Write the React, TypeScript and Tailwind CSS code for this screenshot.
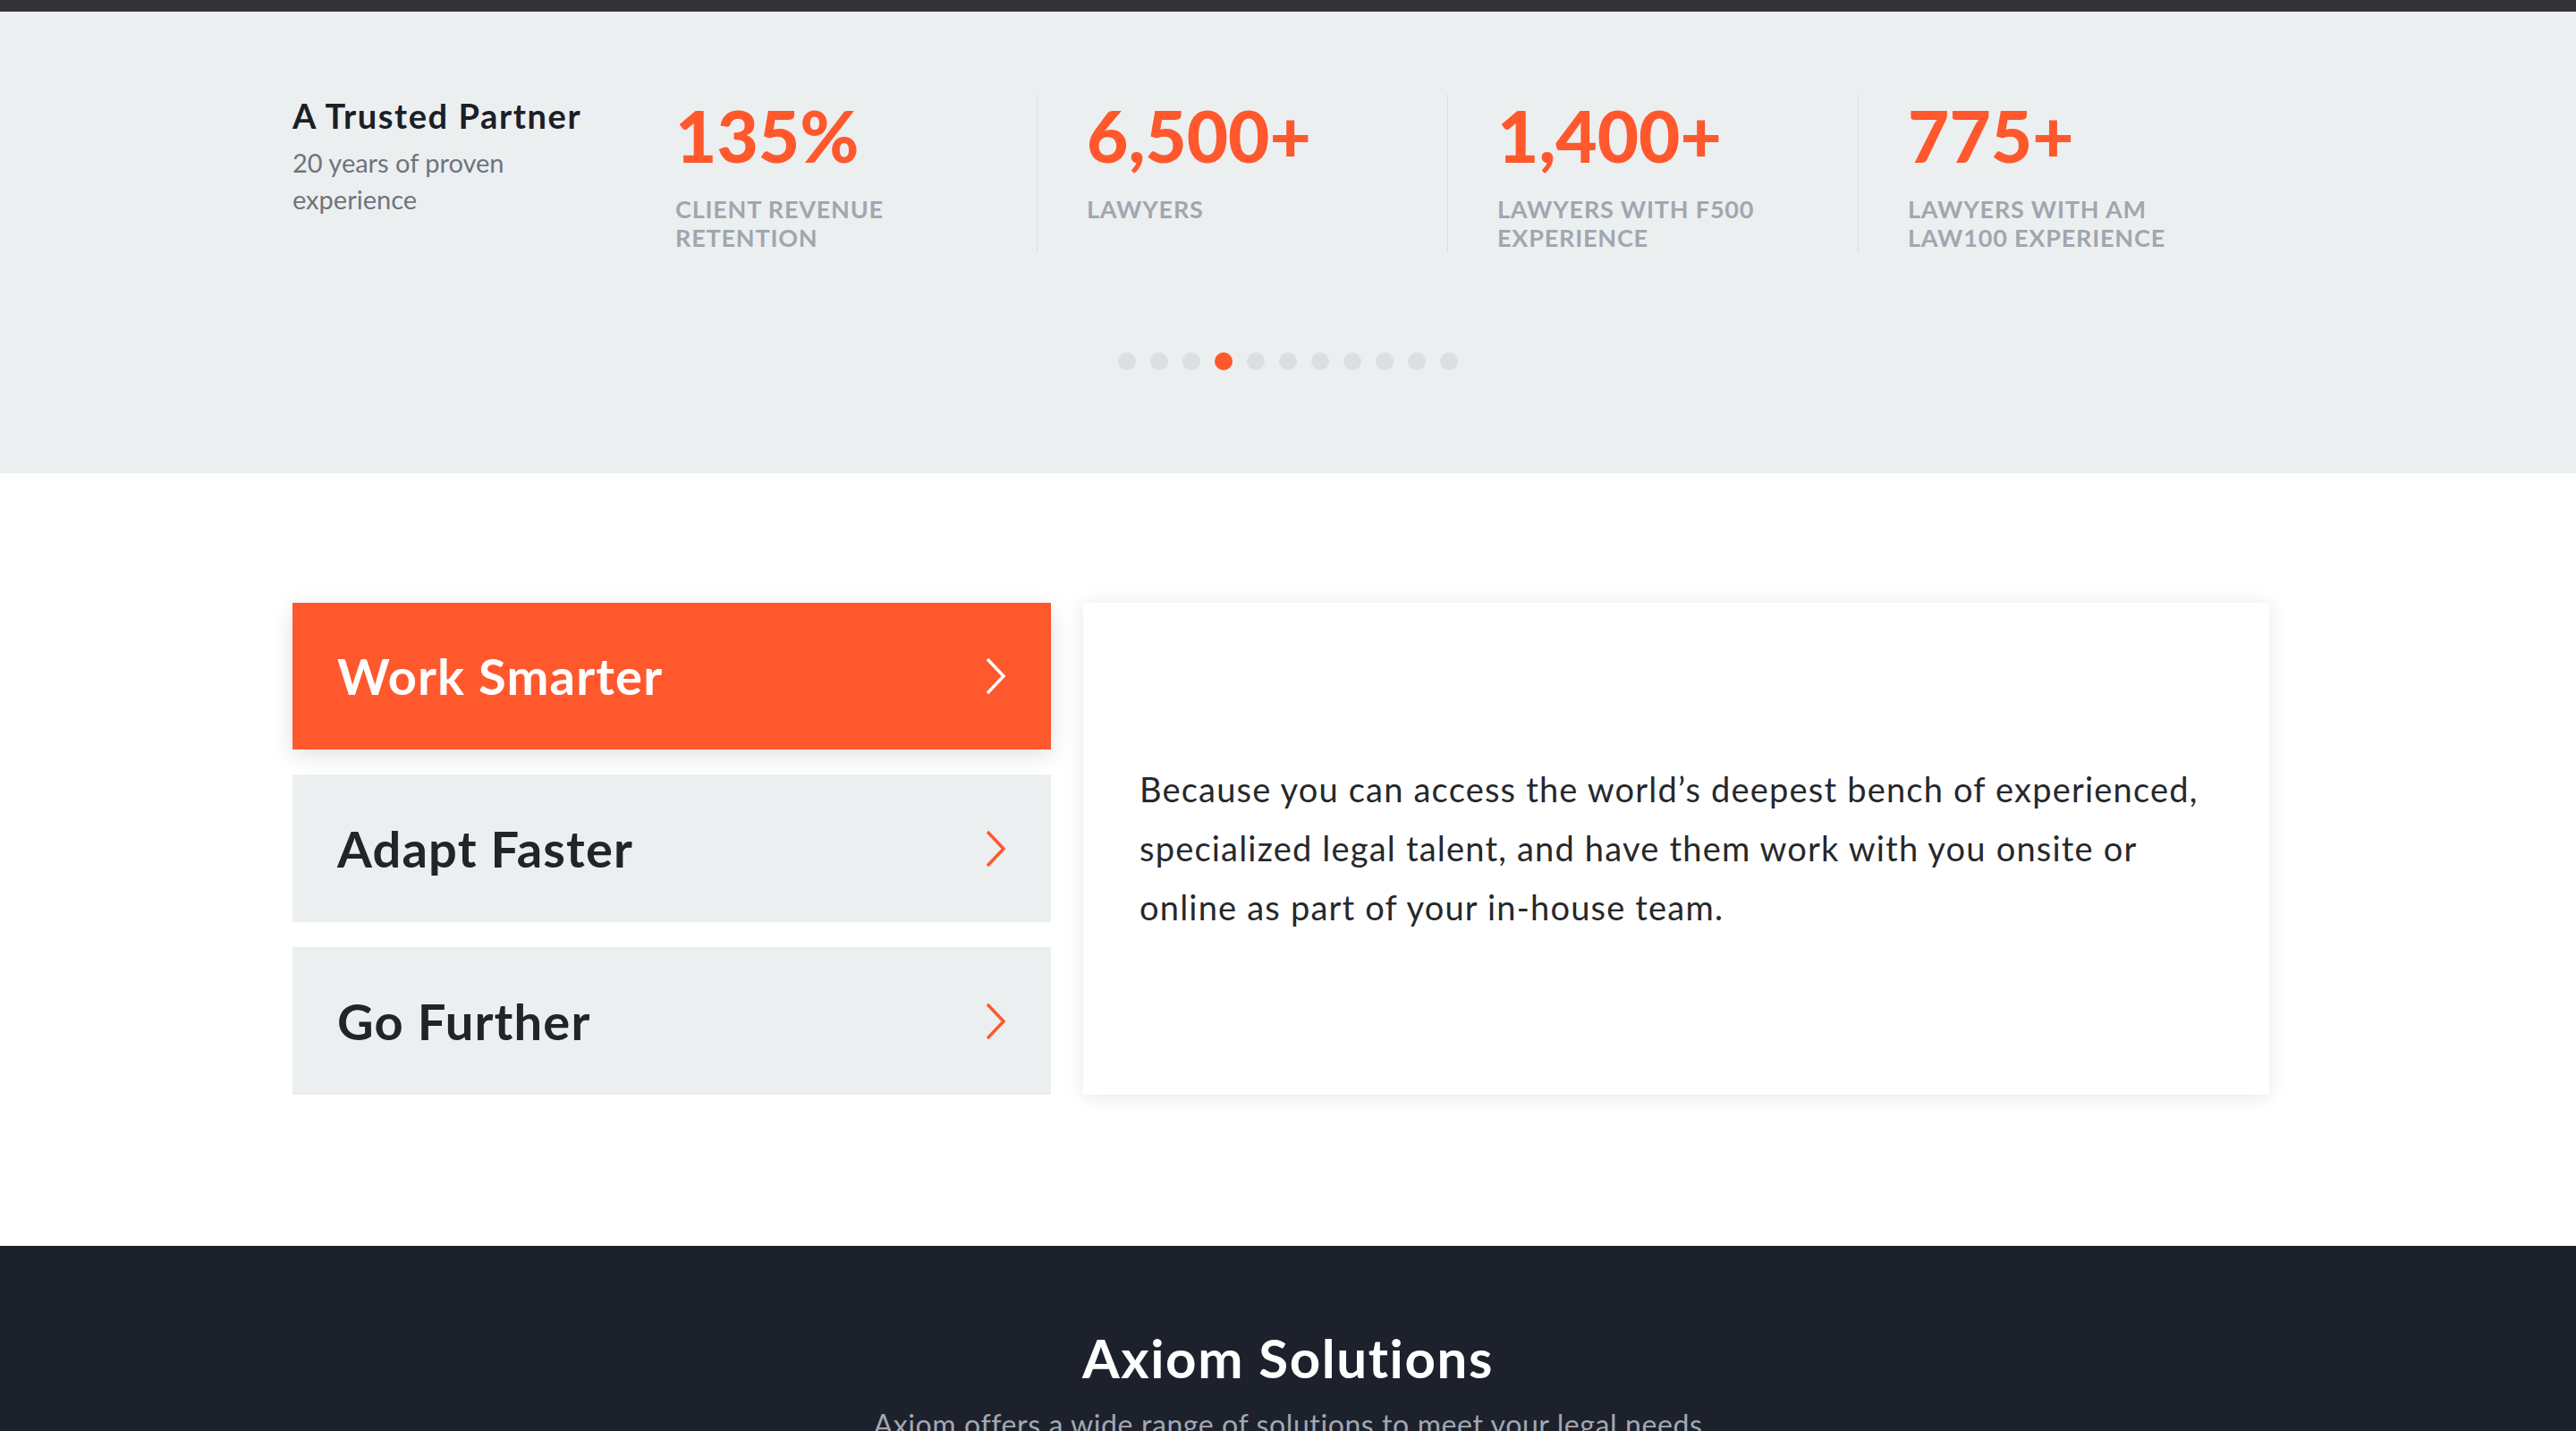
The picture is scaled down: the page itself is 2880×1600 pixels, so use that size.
import React from "react";

const stats = [
  { value: "135%", label: ["CLIENT REVENUE", "RETENTION"] },
  { value: "6,500+", label: ["LAWYERS"] },
  { value: "1,400+", label: ["LAWYERS WITH F500", "EXPERIENCE"] },
  { value: "775+", label: ["LAWYERS WITH AM", "LAW100 EXPERIENCE"] },
];

const tabs = ["Work Smarter", "Adapt Faster", "Go Further"];

const Chevron = ({ color }: { color: string }) => (
  <svg width="26" height="42" viewBox="0 0 26 42" fill="none">
    <polyline points="4,2 22,21 4,40" stroke={color} strokeWidth="3.5" strokeLinejoin="miter" />
  </svg>
);

const App: React.FC = () => {
  return (
    <div className="min-h-[1600px] bg-white font-['Lato',sans-serif]">
      <div className="h-[13px] bg-[#333338]" />

      {/* stats strip */}
      <section className="bg-[#eceff0] h-[516px] pt-[92px]">
        <div className="ml-[327px] w-[2210px] flex items-start">
          <div className="w-[428px]">
            <h3 className="text-[38px] leading-[44px] font-bold text-[#1b1f27] mt-[2px] tracking-[1.6px]">
              A Trusted Partner
            </h3>
            <p className="text-[29px] leading-[41px] text-[#6f747c] mt-[10px]">
              20 years of proven
              <br />
              experience
            </p>
          </div>
          {stats.map((s, i) => (
            <div
              key={s.value}
              className={
                i === 0
                  ? "w-[404px] h-[177px]"
                  : "w-[459px] h-[177px] border-l border-[#d9dde0] pl-[55px]"
              }
            >
              <div className="text-[80px] leading-[80px] font-black text-[#ff582d] mt-[6px] tracking-[0px]">
                {s.value}
              </div>
              <div className="mt-[27px] text-[27px] leading-[32px] font-bold text-[#a1a6af] tracking-[0.8px]">
                {s.label.map((l) => (
                  <div key={l}>{l}</div>
                ))}
              </div>
            </div>
          ))}
        </div>
        <div className="flex justify-center gap-[16px] mt-[112px]">
          {Array.from({ length: 11 }).map((_, i) => (
            <span
              key={i}
              className={
                i === 3
                  ? "w-[20px] h-[20px] rounded-full bg-[#ff582d]"
                  : "w-[20px] h-[20px] rounded-full bg-[#dadfe1]"
              }
            />
          ))}
        </div>
      </section>

      {/* tabs */}
      <section className="bg-white pt-[145px] pb-[169px]">
        <div className="ml-[327px] w-[2210px] flex gap-[36px]">
          <div className="w-[848px] flex flex-col gap-[28px]">
            {tabs.map((t, i) => (
              <div
                key={t}
                className={
                  i === 0
                    ? "h-[164px] bg-[#ff582d] flex items-center justify-between pl-[50px] pr-[49px] shadow-[0_6px_24px_rgba(0,0,0,0.12)]"
                    : "h-[165px] bg-[#eceff0] flex items-center justify-between pl-[50px] pr-[49px]"
                }
              >
                <span
                  className={
                    i === 0
                      ? "text-[56px] font-bold text-white tracking-[1.2px]"
                      : "text-[56px] font-bold text-[#222428] tracking-[1.2px]"
                  }
                >
                  {t}
                </span>
                <Chevron color={i === 0 ? "#ffffff" : "#ff582d"} />
              </div>
            ))}
          </div>
          <div className="w-[1326px] bg-white shadow-[0_2px_20px_rgba(0,0,0,0.1)] flex items-center pl-[63px] pr-[40px]">
            <p className="text-[38px] leading-[66px] text-[#26282c] tracking-[1.2px] mt-[-2px]">
              Because you can access the world’s deepest bench of experienced, specialized legal talent, and have them
              work with you onsite or online as part of your in-house team.
            </p>
          </div>
        </div>
      </section>

      {/* solutions */}
      <section className="bg-[#1d212c] pt-[90px] pb-[80px] text-center">
        <h2 className="text-[60px] leading-[70px] font-bold text-white tracking-[1.6px]">Axiom Solutions</h2>
        <p className="mt-[20px] text-[32px] leading-[40px] text-[#a3a8b1] tracking-[0.6px]">
          Axiom offers a wide range of solutions to meet your legal needs
        </p>
      </section>
    </div>
  );
};

export default App;
